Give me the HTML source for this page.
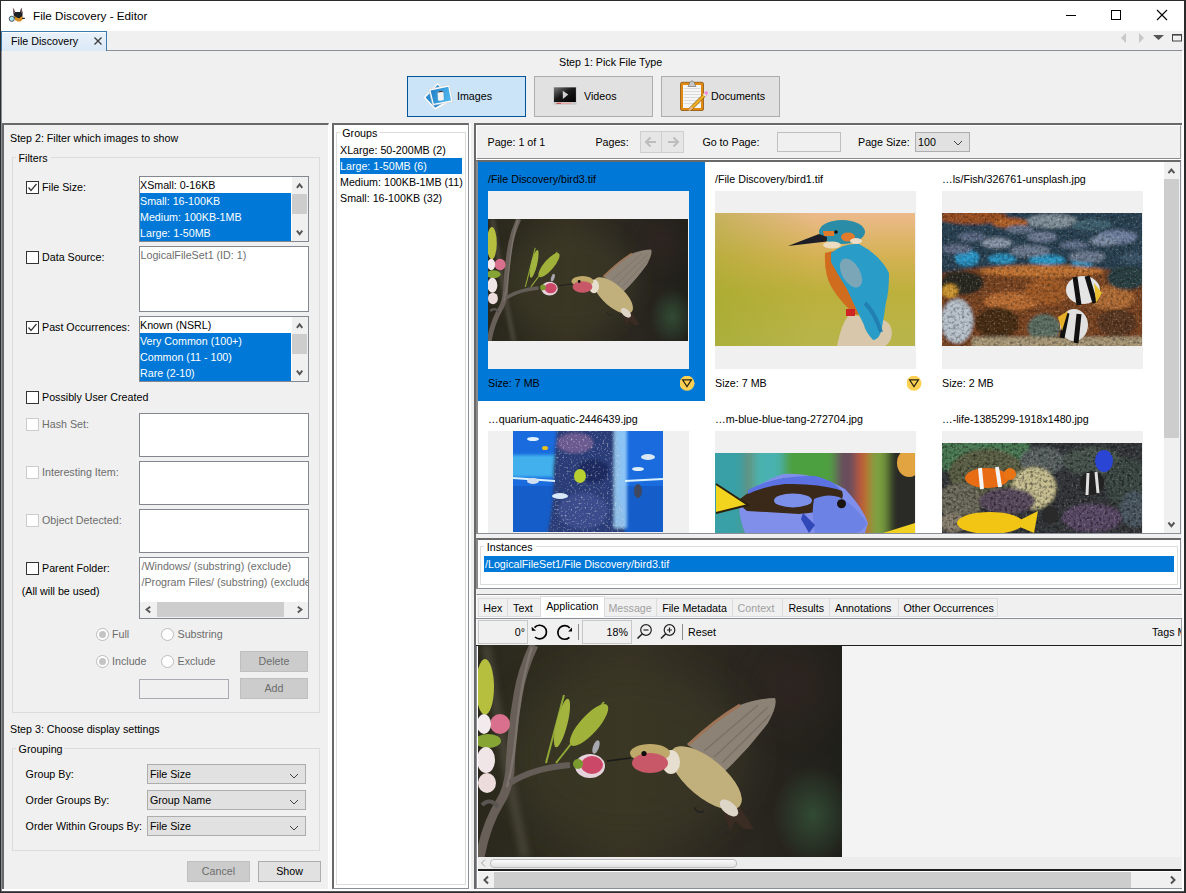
<!DOCTYPE html>
<html><head><meta charset="utf-8">
<style>
html,body{margin:0;padding:0}
body{width:1186px;height:893px;overflow:hidden;position:relative;background:#f0f0f0;font-family:"Liberation Sans",sans-serif;}
.a{position:absolute;box-sizing:border-box}
.t{position:absolute;font-size:10.7px;line-height:13px;white-space:nowrap;color:#000}
.g{color:#6d6d6d}
.w{color:#fff}
.cb{position:absolute;width:13px;height:13px;box-sizing:border-box;border:1px solid #333;background:#fff}
.cbd{border-color:#cccccc}
.lb{position:absolute;box-sizing:border-box;border:1px solid #828790;background:#fff}
.sel{position:absolute;background:#0078d7}
.btn{position:absolute;box-sizing:border-box;border:1px solid #adadad;background:#e1e1e1}
.btnd{background:#cccccc;border-color:#bfbfbf}
.rad{position:absolute;width:13px;height:13px;box-sizing:border-box;border:1px solid #bcbcbc;border-radius:50%;background:#fff}
.tb{position:absolute;box-sizing:border-box;border:1px solid #dcdcdc}
</style></head><body>
<svg width="0" height="0" style="position:absolute">
<defs>
<linearGradient id="hbbg" x1="0" y1="0" x2="1" y2="0"><stop offset="0" stop-color="#2a281d"/><stop offset="0.4" stop-color="#363223"/><stop offset="0.75" stop-color="#2a2620"/><stop offset="1" stop-color="#20201a"/></linearGradient>
<radialGradient id="hbgr" cx="0.5" cy="0.5" r="0.5"><stop offset="0" stop-color="#35553a" stop-opacity="0.8"/><stop offset="1" stop-color="#35553a" stop-opacity="0"/></radialGradient>
<filter id="bl" x="-50%" y="-50%" width="200%" height="200%"><feGaussianBlur stdDeviation="18"/></filter><filter id="bl2" x="-50%" y="-50%" width="200%" height="200%"><feGaussianBlur stdDeviation="3"/></filter>
<symbol id="hb" viewBox="0 0 364 212" preserveAspectRatio="none">
<rect width="364" height="212" fill="url(#hbbg)"/>
<ellipse cx="150" cy="110" rx="120" ry="90" fill="#3e3a26" opacity="0.6" filter="url(#bl)"/>
<ellipse cx="335" cy="170" rx="40" ry="50" fill="url(#hbgr)"/>
<ellipse cx="320" cy="40" rx="40" ry="40" fill="#3a2826" opacity="0.35" filter="url(#bl)"/>
<path d="M8 0 Q25 110 47 212" stroke="#5a564a" stroke-width="9" fill="none" opacity="0.55" filter="url(#bl2)"/>
<path d="M56 0 Q44 25 40 50 Q33 90 32 125 Q30 145 22 157 Q8 180 2 212" stroke="#675f58" stroke-width="9" fill="none"/>
<path d="M54 2 Q43 35 38 90 Q35 120 29 142" stroke="#8a827a" stroke-width="2.5" fill="none" opacity="0.6"/>
<path d="M32 138 Q55 123 92 120" stroke="#645c56" stroke-width="6" fill="none"/>
<path d="M4 160 Q12 152 20 162" stroke="#5a5550" stroke-width="4" fill="none"/>
<path d="M68 118 Q78 80 86 50" stroke="#90a838" stroke-width="2" fill="none"/>
<path d="M78 118 Q100 90 126 57" stroke="#90a838" stroke-width="2" fill="none"/>
<ellipse cx="84" cy="78" rx="5.5" ry="25" transform="rotate(14 84 78)" fill="#a2b43e"/>
<ellipse cx="111" cy="80" rx="9" ry="27" transform="rotate(42 111 80)" fill="#a0b23a"/>
<ellipse cx="118" cy="102" rx="3" ry="7" transform="rotate(20 118 102)" fill="#a8a8b0"/>
<ellipse cx="112" cy="121" rx="15" ry="12" fill="#e6d4dc"/>
<ellipse cx="114" cy="120" rx="11" ry="9" fill="#cc4868"/>
<ellipse cx="100" cy="119" rx="5" ry="5" fill="#7a9a30"/>
<ellipse cx="7" cy="42" rx="9" ry="28" fill="#b6c03e"/>
<ellipse cx="22" cy="79" rx="10" ry="10" fill="#d8708e"/>
<ellipse cx="6" cy="79" rx="7" ry="10" fill="#f2eaec"/>
<ellipse cx="10" cy="96" rx="13" ry="7" fill="#86a434"/>
<ellipse cx="8" cy="115" rx="9" ry="13" fill="#f0e6e8"/>
<ellipse cx="9" cy="138" rx="9" ry="10" fill="#ecdcdc"/>
<path d="M210 100 Q240 70 262 60 Q282 53 297 53 Q300 60 290 78 Q270 105 246 127 Q238 122 233 116 Z" fill="#8c8276"/>
<path d="M236 112 L290 62 M244 118 L292 70 M226 106 L280 60" stroke="#6e6458" stroke-width="1.3" opacity="0.6"/>
<path d="M210 100 Q238 74 262 60" stroke="#9e7456" stroke-width="3" fill="none"/>
<path d="M248 158 L262 162 L276 184 L266 184 L257 176 L252 186 L246 168Z" fill="#3a2c22"/>
<ellipse cx="228" cy="133" rx="44" ry="19" transform="rotate(40 228 133)" fill="#c2b07c"/>
<ellipse cx="251" cy="163" rx="11" ry="6" transform="rotate(40 251 163)" fill="#ddd6c8"/>
<ellipse cx="193" cy="117" rx="9" ry="12" fill="#e6dfd0"/>
<ellipse cx="172" cy="108" rx="20" ry="9" fill="#bfa96a"/>
<ellipse cx="172" cy="118" rx="18" ry="10" fill="#c85868"/>
<path d="M129 116 L153 113" stroke="#1a1a1a" stroke-width="1.5"/>
<circle cx="166" cy="108.5" r="2.6" fill="#0d0d0d"/>
<path d="M216 162 Q220 170 226 166" stroke="#222" stroke-width="1.5" fill="none"/>
</symbol>
<linearGradient id="kfbg" x1="0" y1="0" x2="0" y2="1"><stop offset="0" stop-color="#ecba8c"/><stop offset="0.33" stop-color="#d4b252"/><stop offset="0.6" stop-color="#bcb03c"/><stop offset="1" stop-color="#b8b54c"/></linearGradient>
<linearGradient id="kfbg2" x1="0" y1="0" x2="1" y2="0"><stop offset="0" stop-color="#9aa828" stop-opacity="0.45"/><stop offset="0.5" stop-color="#9aa828" stop-opacity="0"/></linearGradient>
<symbol id="kf" viewBox="0 0 200 133" preserveAspectRatio="none">
<rect width="200" height="133" fill="url(#kfbg)"/>
<rect width="200" height="133" fill="url(#kfbg2)"/>
<path d="M122 133 Q126 112 133 103 Q140 100 150 106 L166 106 Q176 108 177 120 Q176 130 170 133Z" fill="#d8c7aa"/>
<path d="M110 40 Q109 62 117 75 Q127 91 141 102 L152 98 L132 55 L118 38Z" fill="#d06c1e"/>
<path d="M116 40 Q128 30 144 31 Q165 42 174 60 Q174 80 171 89 Q168 110 166 119 Q163 127 158 127 Q150 118 149 112 Q140 94 132 76 Q122 60 116 49Z" fill="#2a9cc8"/>
<ellipse cx="136" cy="60" rx="9" ry="16" transform="rotate(-30 136 60)" fill="#7aa6b8"/>
<path d="M150 90 Q160 100 166 119" stroke="#2280b0" stroke-width="4" fill="none"/>
<ellipse cx="127" cy="19" rx="23" ry="12" fill="#2a8ca6"/>
<path d="M108 18 L119 18 L119 23 L109 23Z" fill="#e07a28"/>
<ellipse cx="133" cy="24" rx="7" ry="4.5" fill="#e27c2c"/>
<ellipse cx="117" cy="32" rx="9" ry="3.5" fill="#ecdcc0"/>
<ellipse cx="141" cy="28" rx="6" ry="3" fill="#ecdcc6"/>
<polygon points="73,33 104,21 112,24 111.7,28.5" fill="#1e1e26"/>
<circle cx="121" cy="19" r="1.8" fill="#111"/>
<rect x="131" y="96" width="9" height="7" fill="#d02424"/>
</symbol>
<filter id="bl4" x="-5%" y="-5%" width="110%" height="110%"><feGaussianBlur stdDeviation="1.6"/></filter>
<symbol id="fc" viewBox="0 0 200 133" preserveAspectRatio="none">
<g filter="url(#bl4)">
<rect x="-5" y="-5" width="210" height="143" fill="#2a3440"/>
<rect x="-5" y="-5" width="210" height="62" fill="#2a4252"/>
<ellipse cx="30" cy="4" rx="35" ry="7" fill="#9a5020"/>
<ellipse cx="68" cy="10" rx="18" ry="5" fill="#b06028"/>
<ellipse cx="110" cy="8" rx="25" ry="7" fill="#80909a"/>
<ellipse cx="150" cy="12" rx="20" ry="6" fill="#406070"/>
<ellipse cx="25" cy="45" rx="12" ry="8" fill="#2a96c8"/>
<ellipse cx="60" cy="46" rx="14" ry="5" fill="#2c92c0"/>
<ellipse cx="105" cy="47" rx="18" ry="5" fill="#2c98c6"/>
<ellipse cx="140" cy="50" rx="10" ry="6" fill="#2a94c4"/>
<ellipse cx="30" cy="24" rx="14" ry="4.5" fill="#5c6a84"/>
<ellipse cx="55" cy="30" rx="15" ry="5" fill="#8a98aa"/>
<ellipse cx="88" cy="38" rx="20" ry="6" fill="#6c7a90"/>
<ellipse cx="78" cy="16" rx="14" ry="4" fill="#66748c"/>
<ellipse cx="100" cy="24" rx="15" ry="5" fill="#6e7c94"/>
<ellipse cx="145" cy="44" rx="18" ry="6" fill="#6c7a90"/>
<ellipse cx="175" cy="24" rx="20" ry="7" fill="#7080a0"/>
<ellipse cx="162" cy="28" rx="14" ry="5" fill="#7a8aa2"/>
<ellipse cx="132" cy="32" rx="14" ry="4" fill="#60708a"/>
<ellipse cx="15" cy="36" rx="15" ry="5" fill="#606c86"/>
<ellipse cx="190" cy="45" rx="12" ry="6" fill="#3a5468"/>
<path d="M-5 62 Q40 50 100 55 Q150 54 205 60 L205 138 L-5 138Z" fill="#7a4420"/>
<ellipse cx="100" cy="58" rx="62" ry="6" fill="#c07232"/>
<ellipse cx="70" cy="88" rx="28" ry="9" fill="#b86c30"/>
<ellipse cx="105" cy="78" rx="22" ry="14" fill="#a05a28"/>
<ellipse cx="170" cy="85" rx="22" ry="12" fill="#b06c34"/>
<ellipse cx="185" cy="65" rx="20" ry="12" fill="#2a4042"/>
<ellipse cx="20" cy="70" rx="22" ry="12" fill="#2a2a22"/>
<ellipse cx="55" cy="110" rx="22" ry="16" fill="#4a2e18"/>
<ellipse cx="175" cy="110" rx="20" ry="14" fill="#5a3820"/>
<ellipse cx="102" cy="115" rx="16" ry="14" fill="#5c6e62"/>
<ellipse cx="15" cy="108" rx="16" ry="22" fill="#b8c2cc"/>
<ellipse cx="8" cy="78" rx="8" ry="7" fill="#d09830"/>
<rect x="30" y="124" width="175" height="14" fill="#a69676"/>
</g>
<rect width="200" height="133" filter="url(#nz)" opacity="0.35"/>
<rect width="200" height="133" filter="url(#nz2)" opacity="0.35"/>
<ellipse cx="141" cy="77" rx="17" ry="14" fill="#e4e4e4"/>
<path d="M133 64 L137 92 M145 63 L153 90" stroke="#111" stroke-width="5"/>
<polygon points="152,70 160,80 154,90" fill="#e8c030"/>
<ellipse cx="132" cy="112" rx="14" ry="16" fill="#e0e0e0"/>
<path d="M125 100 L120 125 M137 101 L134 130" stroke="#111" stroke-width="5"/>
<polygon points="116,104 126,98 120,118" fill="#e8b028"/>
</symbol>
<filter id="nz" x="0" y="0" width="100%" height="100%"><feTurbulence type="fractalNoise" baseFrequency="0.5" numOctaves="1" seed="7"/><feColorMatrix type="matrix" values="0 0 0 0 1  0 0 0 0 0.95  0 0 0 0 0.9  3.2 0 0 0 -1.8"/></filter>
<filter id="nz2" x="0" y="0" width="100%" height="100%"><feTurbulence type="fractalNoise" baseFrequency="0.35" numOctaves="2" seed="11"/><feColorMatrix type="matrix" values="0 0 0 0 0  0 0 0 0 0  0 0 0 0 0  2.5 0 0 0 -1.1"/></filter>
<clipPath id="aqcol"><path d="M44 0 L104 0 Q110 40 104 60 Q112 85 112 101 L34 101 Q42 70 40 40 Z"/></clipPath>
<symbol id="aq" viewBox="0 0 150 101" preserveAspectRatio="none">
<rect width="150" height="101" fill="#1a6cde"/>
<rect x="0" y="55" width="150" height="46" fill="#1458c0" opacity="0.7"/>
<g filter="url(#bl4)">
<rect x="-3" y="24" width="45" height="22" fill="#48bcf0" opacity="0.85"/>
<path d="M44 -3 L104 -3 Q110 40 104 60 Q112 85 112 104 L34 104 Q42 70 40 40 Z" fill="#2c3c78"/>
<ellipse cx="62" cy="12" rx="18" ry="10" fill="#6a5a90"/>
<ellipse cx="80" cy="40" rx="16" ry="12" fill="#1c2c60"/>
<ellipse cx="70" cy="80" rx="25" ry="18" fill="#3a4c8c"/>
<rect x="101" y="-3" width="13" height="100" fill="#a0d4fa" opacity="0.85"/>
</g>
<rect width="150" height="101" filter="url(#nz)" clip-path="url(#aqcol)" opacity="0.55"/>
<path d="M0 47 L42 50 M112 50 L150 48" stroke="#d8f0ff" stroke-width="2"/>
<ellipse cx="20" cy="8" rx="6" ry="2" fill="#e0f0ff"/>
<ellipse cx="32" cy="17" rx="3" ry="2" fill="#e8c020"/>
<ellipse cx="67" cy="45" rx="6" ry="7" fill="#b8d030"/>
<ellipse cx="47" cy="65" rx="8" ry="3" fill="#d8e8f8"/>
<ellipse cx="125" cy="60" rx="4" ry="7" fill="#404860"/>
<ellipse cx="135" cy="26" rx="7" ry="3" fill="#d8e8f8"/>
<ellipse cx="125" cy="38" rx="6" ry="2" fill="#e0eef8"/>
<ellipse cx="20" cy="50" rx="6" ry="3" fill="#d0e0f0"/>
</symbol>
<filter id="bl3" x="-10%" y="-10%" width="120%" height="120%"><feGaussianBlur stdDeviation="5 0"/></filter>
<symbol id="bt" viewBox="0 0 200 80" preserveAspectRatio="none">
<g filter="url(#bl3)">
<rect x="-10" y="-5" width="220" height="90" fill="#3c7c70"/>
<rect x="-10" y="-5" width="45" height="90" fill="#38a0a6"/>
<rect x="30" y="-5" width="8" height="90" fill="#6a8a6a"/>
<rect x="38" y="-5" width="30" height="90" fill="#4ab2b0"/>
<rect x="68" y="-5" width="52" height="90" fill="#4ea040"/>
<rect x="120" y="-5" width="22" height="90" fill="#684e5c"/>
<rect x="142" y="-5" width="12" height="90" fill="#c45c2e"/>
<rect x="154" y="-5" width="18" height="90" fill="#7ca040"/>
<rect x="172" y="-5" width="38" height="90" fill="#2a2c28"/>
</g>
<ellipse cx="194" cy="10" rx="12" ry="14" fill="#e2a440"/>
<polygon points="168,80 200,70 200,80" fill="#f0d020"/>
<path d="M24 50 Q40 30 68 21 Q100 19 130 36 Q148 55 153 70 L150 80 L30 80 Q24 65 24 50Z" fill="#8090ea"/>
<path d="M25 46 Q45 30 70 25 Q100 24 127 38 Q130 46 122 51 Q105 60 84 61 L32 58 Q24 52 25 46Z" fill="#3a2818"/>
<path d="M33 37 Q60 22 100 23 Q118 27 126 37 Q100 30 70 31 Q50 33 33 41Z" fill="#5c72e2"/>
<ellipse cx="78" cy="47.4" rx="19" ry="7" fill="#7c90ea"/>
<path d="M99 46 Q112 40 124 44 Q140 52 152 70 Q148 80 138 80 L100 80 Q96 62 99 46Z" fill="#6c82e4"/>
<path d="M88 60 L100 72 L94 80 L86 66Z" fill="#3048b8"/>
<circle cx="126.5" cy="50.8" r="4.5" fill="#1a1410"/>
<polygon points="1,31 33,52 1,60" fill="#f2d41e"/>
<path d="M1 31 L33 52 L1 60" stroke="#2a2010" stroke-width="2" fill="none"/>
</symbol>
<symbol id="cf" viewBox="0 0 200 90" preserveAspectRatio="none">
<g filter="url(#bl4)">
<rect x="-5" y="-5" width="210" height="100" fill="#34383a"/>
<rect x="-5" y="-5" width="92" height="32" fill="#4c7a54"/>
<ellipse cx="45" cy="30" rx="38" ry="24" fill="#5c6044"/>
<ellipse cx="18" cy="58" rx="22" ry="18" fill="#6e6c5c"/>
<ellipse cx="100" cy="18" rx="22" ry="14" fill="#5c6464"/>
<ellipse cx="150" cy="18" rx="30" ry="14" fill="#485450"/>
<ellipse cx="185" cy="40" rx="22" ry="25" fill="#3e4a44"/>
<ellipse cx="92" cy="45" rx="22" ry="21" fill="#c6be90"/>
<ellipse cx="65" cy="58" rx="28" ry="13" fill="#5a4c5e"/>
<ellipse cx="150" cy="75" rx="30" ry="14" fill="#5c4c68"/>
<ellipse cx="192" cy="66" rx="14" ry="18" fill="#4c5862"/>
<ellipse cx="10" cy="80" rx="12" ry="10" fill="#8a8070"/>
</g>
<rect width="200" height="90" filter="url(#nz)" opacity="0.3"/>
<rect width="200" height="90" filter="url(#nz2)" opacity="0.5"/>
<ellipse cx="45" cy="35" rx="22" ry="10" fill="#e86c14"/>
<path d="M38 25 L40 46 M55 24 L58 44" stroke="#f4f4f4" stroke-width="4"/>
<ellipse cx="68" cy="31" rx="6" ry="6" fill="#e87414"/>
<ellipse cx="162" cy="18" rx="9" ry="11" fill="#2a44d4"/>
<ellipse cx="150" cy="40" rx="12" ry="12" fill="#222"/>
<path d="M146 30 L145 52 M154 29 L156 50" stroke="#e0e0e0" stroke-width="3"/>
<ellipse cx="48" cy="80" rx="33" ry="11" fill="#f2c414"/>
<polygon points="78,77 96,68 92,90 78,84" fill="#f0c818"/>
<ellipse cx="108" cy="72" rx="8" ry="9" fill="#2a2a2a"/>
</symbol>
</defs></svg>
<!-- window frame -->
<div class="a" style="left:0;top:0;width:1186px;height:893px;border:1px solid #2b2b2b;border-right-width:2px;border-bottom-width:2px"></div>
<!-- title bar -->
<div class="a" style="left:1px;top:1px;width:1183px;height:30px;background:#fff"></div>
<div class="t" style="left:33px;top:9px;font-size:11.7px;line-height:14px">File Discovery - Editor</div>
<!-- window controls -->
<div class="a" style="left:1066px;top:15px;width:10px;height:1px;background:#000"></div>
<div class="a" style="left:1111px;top:10px;width:10px;height:10px;border:1px solid #000"></div>
<svg class="a" style="left:1156px;top:9px" width="12" height="12"><path d="M1 1L11 11M11 1L1 11" stroke="#000" stroke-width="1.1"/></svg>


<!-- app icon -->
<svg class="a" style="left:6px;top:4px" width="24" height="22" viewBox="0 0 24 22">
<path d="M6.8 3.5 L9.3 8 L14 8 L15.3 3.5 L16.6 8.5 L16.4 12.5 L13.8 14.5 L10 14 L7.8 12 L7.4 8.5Z" fill="#1b2129"/>
<path d="M7.6 5 L8.6 9" stroke="#b87070" stroke-width="0.9"/>
<path d="M15.4 5.5 L15.6 9" stroke="#9a5a50" stroke-width="0.9"/>
<path d="M8 11.8 L10.5 13.2 L12.5 14.5 L14 13.5 L16.6 12 L16.5 15.5 L14.5 17.6 L11.5 17.6 L9 16 Z" fill="#d98c1c"/>
<path d="M12.2 13 L14.2 13 L13.2 14.6Z" fill="#111"/>
<path d="M16 14.2 L18.8 14.4" stroke="#111" stroke-width="1.1"/>
<circle cx="5.8" cy="14.8" r="2.6" fill="#a8e2f2" stroke="#3a4a50" stroke-width="0.9"/>
<path d="M8.2 13.8 L9.5 13.2" stroke="#3a4a50" stroke-width="1"/>
</svg>
<!-- tab bar -->
<div class="a" style="left:1px;top:31px;width:106px;height:20px;border:1px solid #3d7ab0;border-bottom:none;background:linear-gradient(#e9f2fb,#dbe8f7)"></div>
<div class="a" style="left:2px;top:32px;width:103px;height:1px;background:#fff"></div>
<div class="t" style="left:11px;top:35px">File Discovery</div>
<svg class="a" style="left:93px;top:36px" width="10" height="10"><path d="M1.5 1.5L8.5 8.5M8.5 1.5L1.5 8.5" stroke="#404040" stroke-width="1.4"/></svg>
<div class="a" style="left:107px;top:50px;width:1075px;height:1px;background:#8a8f9a"></div>
<svg class="a" style="left:1118px;top:32px" width="66" height="13">
<path d="M8 1 L3 6 L8 11Z" fill="#c8c8c8"/>
<path d="M21 1 L26 6 L21 11Z" fill="#c8c8c8"/>
<path d="M35 3 L46 3 L40.5 8Z" fill="#555"/>
<rect x="54.5" y="2.5" width="9" height="6.5" fill="none" stroke="#444" stroke-width="1"/>
<rect x="54" y="2" width="10" height="1.6" fill="#444"/>
</svg>
<!-- content borders -->
<div class="a" style="left:1px;top:51px;width:1px;height:840px;background:#8a8f9a"></div>
<div class="a" style="left:1182px;top:51px;width:2px;height:840px;background:#fff"></div>
<div class="a" style="left:2px;top:889px;width:1182px;height:2px;background:#fff"></div>
<div class="a" style="left:1px;top:891px;width:1183px;height:1px;background:#55585e"></div>
<!-- step 1 -->
<div class="t" style="left:559px;top:56px">Step 1: Pick File Type</div>
<div class="btn" style="left:407px;top:76px;width:119px;height:41px;background:#cce4f7;border-color:#005499"></div>
<div class="btn" style="left:534px;top:76px;width:119px;height:41px"></div>
<div class="btn" style="left:661px;top:76px;width:119px;height:41px"></div>
<div class="t" style="left:457px;top:90px">Images</div>
<div class="t" style="left:584px;top:90px">Videos</div>
<div class="t" style="left:711px;top:90px">Documents</div>
<svg class="a" style="left:415px;top:76px" width="50" height="40">
<defs><linearGradient id="ph" x1="0" y1="0" x2="1" y2="0.3"><stop offset="0" stop-color="#1f7cc4"/><stop offset="1" stop-color="#4cb4ec"/></linearGradient></defs>
<polygon points="8.3,21.5 22.8,6.6 38,24 20.2,34" fill="#fff" stroke="#d8d8d8" stroke-width="0.6"/>
<polygon points="10.5,21.5 22.8,8.8 35,23 20.2,31.8" fill="#2a8cd0"/>
<polygon points="13.8,13.2 34.5,8.8 37.8,25.8 17.8,29.3" fill="#fff" stroke="#cfcfcf" stroke-width="0.6"/>
<polygon points="15.6,14.6 33.3,10.8 36,24.4 18.8,27.8" fill="url(#ph)"/>
<path d="M22.5 16.5 Q25.5 13.5 28.5 16 L28.8 24 Q25.5 25.5 23 24.2Z" fill="#f2f2f2"/>
<path d="M22.3 16.8 Q25.5 13 28.7 16.2 Q25.5 15.5 22.3 16.8Z" fill="#333"/>
</svg>
<svg class="a" style="left:545px;top:76px" width="50" height="40">
<defs><linearGradient id="vs" x1="0" y1="0" x2="1" y2="1"><stop offset="0" stop-color="#7a7a7a"/><stop offset="0.45" stop-color="#1a1a1a"/><stop offset="1" stop-color="#000"/></linearGradient></defs>
<rect x="8.3" y="11" width="23.3" height="17.7" fill="#c8c8c8"/>
<rect x="9" y="11.4" width="21.9" height="14.6" fill="url(#vs)"/>
<polygon points="17.7,14.8 23.3,18.4 17.9,22.9" fill="#d0d0d0"/>
<rect x="11.5" y="26.8" width="15" height="1.2" fill="#e8a8a8"/>
<rect x="11.5" y="26.8" width="4.5" height="1.2" fill="#c85858"/>
</svg>
<svg class="a" style="left:670px;top:76px" width="50" height="40">
<rect x="10.5" y="6.3" width="23" height="28.2" rx="1.5" fill="#e08a12" stroke="#8a5512" stroke-width="0.8"/>
<rect x="13" y="9" width="18" height="23" fill="#f6f6f6"/>
<path d="M13.5 12.5H30.5M13.5 15.5H30.5M13.5 18.5H30.5M13.5 21.5H30.5M13.5 24.5H30.5M13.5 27.5H30.5" stroke="#d4d4d4" stroke-width="0.8"/>
<path d="M18 10.5 L20 6.5 Q22 3.2 24 6.5 L26 10.5Z" fill="#c8c8c8" stroke="#777" stroke-width="0.7"/>
<path d="M20 33.5 L35.5 18" stroke="#8a5a10" stroke-width="3.6"/>
<path d="M20 33.5 L35.5 18" stroke="#f2b424" stroke-width="2.4"/>
<path d="M34 19.5 L36.5 17" stroke="#e8e8e8" stroke-width="3.4"/>
<circle cx="36.2" cy="17" r="1.8" fill="#ee88dd"/>
<path d="M19 34.5 L21.5 31.5 L22 32.2Z" fill="#f0c898" stroke="#e8b888" stroke-width="1.5"/>
</svg>


<!-- LEFT PANEL -->
<div class="a" style="left:2px;top:123px;width:327px;height:766px;border-top:2px solid #696969;border-left:2px solid #696969;border-right:1px solid #fff"></div>
<div class="a" style="left:329px;top:123px;width:3px;height:766px;background:#fbfbfb"></div>
<div class="t" style="left:10px;top:132px">Step 2: Filter which images to show</div>
<div class="a" style="left:12px;top:157px;width:308px;height:556px;border:1px solid #dcdcdc"></div>
<div class="a" style="left:16px;top:152px;width:35px;height:12px;background:#f0f0f0"></div>
<div class="t" style="left:18.6px;top:152px">Filters</div>

<!-- File Size -->
<div class="cb" style="left:26px;top:181px"></div>
<svg class="a" style="left:26px;top:181px" width="13" height="13"><path d="M2.5 6.5 L5 9.5 L10.5 3" stroke="#333" stroke-width="1.2" fill="none"/></svg>
<div class="t" style="left:42px;top:181px">File Size:</div>
<div class="lb" style="left:139px;top:176px;width:170px;height:66px"></div>
<div class="sel" style="left:140px;top:193px;width:151px;height:48px"></div>
<div class="t" style="left:140px;top:179px">XSmall: 0-16KB</div>
<div class="t w" style="left:140px;top:195px">Small: 16-100KB</div>
<div class="t w" style="left:140px;top:211px">Medium: 100KB-1MB</div>
<div class="t w" style="left:140px;top:227px">Large: 1-50MB</div>
<div class="a" style="left:292px;top:177px;width:16px;height:64px;background:#f0f0f0"></div>
<div class="a" style="left:292px;top:194px;width:15px;height:20px;background:#cdcdcd"></div>
<svg class="a" style="left:291px;top:177px" width="17" height="64"><path d="M5.9 10.8 L8.6 7.3 L11.3 10.8 M5.9 53.7 L8.6 57.2 L11.3 53.7" stroke="#555" stroke-width="1.9" fill="none"/></svg>

<!-- Data Source -->
<div class="cb" style="left:26px;top:251px"></div>
<div class="t" style="left:42px;top:251px">Data Source:</div>
<div class="lb" style="left:139px;top:246px;width:170px;height:66px"></div>
<div class="t g" style="left:140.5px;top:249px">LogicalFileSet1 (ID: 1)</div>

<!-- Past Occurrences -->
<div class="cb" style="left:26px;top:321px"></div>
<svg class="a" style="left:26px;top:321px" width="13" height="13"><path d="M2.5 6.5 L5 9.5 L10.5 3" stroke="#333" stroke-width="1.2" fill="none"/></svg>
<div class="t" style="left:42px;top:321px">Past Occurrences:</div>
<div class="lb" style="left:139px;top:316px;width:170px;height:66px"></div>
<div class="sel" style="left:140px;top:333px;width:151px;height:48px"></div>
<div class="t" style="left:140px;top:319px">Known (NSRL)</div>
<div class="t w" style="left:140px;top:335px">Very Common (100+)</div>
<div class="t w" style="left:140px;top:351px">Common (11 - 100)</div>
<div class="t w" style="left:140px;top:367px">Rare (2-10)</div>
<div class="a" style="left:292px;top:317px;width:16px;height:64px;background:#f0f0f0"></div>
<div class="a" style="left:292px;top:334px;width:15px;height:20px;background:#cdcdcd"></div>
<svg class="a" style="left:291px;top:317px" width="17" height="64"><path d="M5.9 10.8 L8.6 7.3 L11.3 10.8 M5.9 53.7 L8.6 57.2 L11.3 53.7" stroke="#555" stroke-width="1.9" fill="none"/></svg>

<!-- Possibly user created -->
<div class="cb" style="left:26px;top:391px"></div>
<div class="t" style="left:42px;top:391px">Possibly User Created</div>

<!-- Hash set etc -->
<div class="cb cbd" style="left:26px;top:418px"></div>
<div class="t g" style="left:42px;top:418px">Hash Set:</div>
<div class="lb" style="left:139px;top:413px;width:170px;height:44px"></div>
<div class="cb cbd" style="left:26px;top:466px"></div>
<div class="t g" style="left:42px;top:466px">Interesting Item:</div>
<div class="lb" style="left:139px;top:461px;width:170px;height:44px"></div>
<div class="cb cbd" style="left:26px;top:514px"></div>
<div class="t g" style="left:42px;top:514px">Object Detected:</div>
<div class="lb" style="left:139px;top:509px;width:170px;height:44px"></div>

<!-- Parent folder -->
<div class="cb" style="left:26px;top:562px"></div>
<div class="t" style="left:42px;top:562px">Parent Folder:</div>
<div class="t" style="left:21.7px;top:585px">(All will be used)</div>
<div class="lb" style="left:139px;top:557px;width:170px;height:62px;overflow:hidden">
<div class="t g" style="left:1.5px;top:2px">/Windows/ (substring) (exclude)</div>
<div class="t g" style="left:1.5px;top:18px">/Program Files/ (substring) (exclude)</div>
<div class="a" style="left:0;top:44px;width:168px;height:16px;background:#f0f0f0"></div>
<div class="a" style="left:17px;top:44px;width:127px;height:15px;background:#cdcdcd"></div>
<svg class="a" style="left:0;top:44px" width="168" height="16"><path d="M10.2 4.8 L6.6 7.6 L10.2 10.4 M157.8 4.8 L161.4 7.6 L157.8 10.4" stroke="#555" stroke-width="1.9" fill="none"/></svg>
</div>

<!-- radios -->
<div class="rad" style="left:96px;top:628px"></div><div class="a" style="left:99px;top:631px;width:7px;height:7px;border-radius:50%;background:#c4c4c4"></div>
<div class="t g" style="left:112px;top:628px">Full</div>
<div class="rad" style="left:161px;top:628px"></div>
<div class="t g" style="left:177.5px;top:628px">Substring</div>
<div class="rad" style="left:96px;top:655px"></div><div class="a" style="left:99px;top:658px;width:7px;height:7px;border-radius:50%;background:#c4c4c4"></div>
<div class="t g" style="left:112px;top:655px">Include</div>
<div class="rad" style="left:161px;top:655px"></div>
<div class="t g" style="left:177.5px;top:655px">Exclude</div>
<div class="btn btnd" style="left:240px;top:651px;width:68px;height:21px"></div>
<div class="t g" style="left:240px;top:655px;width:68px;text-align:center">Delete</div>
<div class="a" style="left:139px;top:679px;width:90px;height:20px;border:1px solid #a8abb2;background:#f0f0f0"></div>
<div class="btn btnd" style="left:240px;top:678px;width:68px;height:21px"></div>
<div class="t g" style="left:240px;top:682px;width:68px;text-align:center">Add</div>

<!-- step 3 -->
<div class="t" style="left:10px;top:723px">Step 3: Choose display settings</div>
<div class="a" style="left:12px;top:748px;width:308px;height:103px;border:1px solid #dcdcdc"></div>
<div class="a" style="left:16px;top:743px;width:48px;height:12px;background:#f0f0f0"></div>
<div class="t" style="left:18.6px;top:743px">Grouping</div>
<div class="t" style="left:25.6px;top:768px">Group By:</div>
<div class="t" style="left:25.6px;top:794px">Order Groups By:</div>
<div class="t" style="left:25.6px;top:820px">Order Within Groups By:</div>
<div class="btn" style="left:147px;top:764px;width:159px;height:20px"></div>
<div class="btn" style="left:147px;top:790px;width:159px;height:20px"></div>
<div class="btn" style="left:147px;top:816px;width:159px;height:20px"></div>
<div class="t" style="left:150px;top:768px">File Size</div>
<div class="t" style="left:150px;top:794px">Group Name</div>
<div class="t" style="left:150px;top:820px">File Size</div>
<svg class="a" style="left:288px;top:770px" width="12" height="66"><path d="M2 4 L6 8 L10 4M2 30 L6 34 L10 30M2 56 L6 60 L10 56" stroke="#444" stroke-width="1" fill="none"/></svg>
<div class="btn btnd" style="left:187px;top:861px;width:63px;height:21px"></div>
<div class="t g" style="left:187px;top:865px;width:63px;text-align:center">Cancel</div>
<div class="btn" style="left:258px;top:861px;width:63px;height:21px"></div>
<div class="t" style="left:258px;top:865px;width:63px;text-align:center">Show</div>


<!-- GROUPS PANEL -->
<div class="a" style="left:332px;top:123px;width:137px;height:766px;background:#fff;border-top:2px solid #696969;border-left:2px solid #696969;border-right:1px solid #8a8f9a;border-bottom:1px solid #8a8f9a"></div>
<div class="a" style="left:469px;top:123px;width:2px;height:766px;background:#fff"></div>
<div class="a" style="left:336px;top:132px;width:130px;height:753px;border:1px solid #dcdcdc"></div>
<div class="a" style="left:340px;top:127px;width:40px;height:12px;background:#fff"></div>
<div class="t" style="left:342.3px;top:127px">Groups</div>
<div class="sel" style="left:340px;top:158px;width:122px;height:16px"></div>
<div class="t" style="left:340px;top:143.5px">XLarge: 50-200MB (2)</div>
<div class="t w" style="left:340px;top:159.5px">Large: 1-50MB (6)</div>
<div class="t" style="left:340px;top:175.5px">Medium: 100KB-1MB (11)</div>
<div class="t" style="left:340px;top:191.5px">Small: 16-100KB (32)</div>

<!-- RIGHT PANEL -->
<div class="a" style="left:474px;top:123px;width:708px;height:766px;border-top:2px solid #696969;border-left:2px solid #696969"></div>
<!-- pager -->
<div class="a" style="left:476px;top:125px;width:705px;height:34px;border-top:1px solid #fff;border-left:1px solid #fff;border-right:1px solid #a0a0a0;border-bottom:1px solid #8c8c8c"></div>
<div class="a" style="left:476px;top:159px;width:705px;height:1px;background:#fff"></div>
<div class="t" style="left:487.5px;top:136px">Page: 1 of 1</div>
<div class="t" style="left:595.4px;top:136px">Pages:</div>
<div class="btn" style="left:640px;top:131px;width:22px;height:22px;background:#e6e6e6;border-color:#cfcfcf"></div>
<div class="btn" style="left:661px;top:131px;width:23px;height:22px;background:#e6e6e6;border-color:#cfcfcf"></div>
<svg class="a" style="left:640px;top:131px" width="44" height="22"><path d="M16 11 H6 M10.5 6.5 L6 11 L10.5 15.5 M28 11 H38 M33.5 6.5 L38 11 L33.5 15.5" stroke="#bdbdbd" stroke-width="2" fill="none"/></svg>
<div class="t" style="left:702.4px;top:136px">Go to Page:</div>
<div class="a" style="left:777px;top:132px;width:64px;height:20px;border:1px solid #bfbfbf;background:#f0f0f0"></div>
<div class="t" style="left:858px;top:136px">Page Size:</div>
<div class="btn" style="left:915px;top:132px;width:55px;height:20px"></div>
<div class="t" style="left:918px;top:136px">100</div>
<svg class="a" style="left:952px;top:138px" width="12" height="10"><path d="M2 3 L6 7 L10 3" stroke="#444" stroke-width="1" fill="none"/></svg>

<!-- grid -->
<div class="a" style="left:476px;top:160px;width:705px;height:374px;background:#fff;border-top:2px solid #696969;border-left:2px solid #8a8a8a;border-right:1px solid #8a8f9a;border-bottom:1px solid #8a8f9a;overflow:hidden">
<div class="sel" style="left:0;top:0;width:227px;height:239px"></div>
<div class="t" style="left:10px;top:11px">/File Discovery/bird3.tif</div>
<div class="t" style="left:237px;top:11px">/File Discovery/bird1.tif</div>
<div class="t" style="left:464px;top:11px">&hellip;ls/Fish/326761-unsplash.jpg</div>
<div class="a" style="left:10px;top:29px;width:201px;height:178px;background:#f0f0f0"></div>
<div class="a" style="left:237px;top:29px;width:201px;height:178px;background:#f0f0f0"></div>
<div class="a" style="left:464px;top:29px;width:201px;height:178px;background:#f0f0f0"></div>
<svg class="a" style="left:10px;top:57px" width="200" height="122"><use href="#hb"/></svg>
<svg class="a" style="left:237px;top:51px" width="200" height="133"><use href="#kf"/></svg>
<svg class="a" style="left:464px;top:51px" width="200" height="133"><use href="#fc"/></svg>
<div class="t" style="left:10px;top:215px">Size: 7 MB</div>
<div class="t" style="left:237px;top:215px">Size: 7 MB</div>
<div class="t" style="left:464px;top:215px">Size: 2 MB</div>
<svg class="a" style="left:202px;top:214px" width="15" height="15"><circle cx="7" cy="7.2" r="7.5" fill="#fcd052"/><path d="M2.6 3.9 L11.4 3.9 L7 10.6Z" fill="none" stroke="#2a2410" stroke-width="1.2"/></svg><svg class="a" style="left:429px;top:214px" width="15" height="15"><circle cx="7" cy="7.2" r="7.5" fill="#fcd052"/><path d="M2.6 3.9 L11.4 3.9 L7 10.6Z" fill="none" stroke="#2a2410" stroke-width="1.2"/></svg>
<div class="t" style="left:10px;top:251px">&hellip;quarium-aquatic-2446439.jpg</div>
<div class="t" style="left:237px;top:251px">&hellip;m-blue-blue-tang-272704.jpg</div>
<div class="t" style="left:464px;top:251px">&hellip;-life-1385299-1918x1480.jpg</div>
<div class="a" style="left:10px;top:269px;width:201px;height:178px;background:#f0f0f0"></div>
<div class="a" style="left:237px;top:269px;width:201px;height:178px;background:#f0f0f0"></div>
<div class="a" style="left:464px;top:269px;width:201px;height:178px;background:#f0f0f0"></div>
<svg class="a" style="left:35px;top:269px" width="150" height="101"><use href="#aq"/></svg>
<svg class="a" style="left:237px;top:291px" width="200" height="80"><use href="#bt"/></svg>
<svg class="a" style="left:464px;top:281px" width="200" height="90"><use href="#cf"/></svg>
<div class="a" style="left:686px;top:0;width:16px;height:371px;background:#f0f0f0"></div>
<div class="a" style="left:686px;top:17px;width:15px;height:259px;background:#cdcdcd"></div>
<svg class="a" style="left:686px;top:0" width="16" height="371"><path d="M4.4 11.2 L7.4 7.6 L10.4 11.2 M4.4 360.5 L7.4 364.1 L10.4 360.5" stroke="#555" stroke-width="2" fill="none"/></svg>

</div>


<!-- INSTANCES -->
<div class="a" style="left:476px;top:538px;width:705px;height:51px;background:#fff;border-top:2px solid #696969;border-left:2px solid #8a8a8a;border-right:1px solid #8a8f9a;border-bottom:1px solid #8a8f9a"></div>
<div class="a" style="left:480px;top:546px;width:698px;height:39px;border:1px solid #dcdcdc"></div>
<div class="a" style="left:484px;top:541px;width:52px;height:10px;background:#fff"></div>
<div class="t" style="left:486.8px;top:541px">Instances</div>
<div class="sel" style="left:484px;top:556px;width:690px;height:16px"></div>
<div class="t w" style="left:485px;top:557.5px">/LogicalFileSet1/File Discovery/bird3.tif</div>

<!-- CONTENT VIEWER -->
<div class="a" style="left:476px;top:594px;width:706px;height:295px;border-top:1px solid #8c8c8c;border-left:1px solid #fafafa"></div>
<div class="a" style="left:478px;top:595px;width:703px;height:1px;background:#fff"></div>
<!-- tabs -->
<div class="tb" style="left:478px;top:598px;width:30px;height:19px"></div>
<div class="tb" style="left:507px;top:598px;width:34px;height:19px"></div>
<div class="tb" style="left:604px;top:598px;width:53px;height:19px"></div>
<div class="tb" style="left:656px;top:598px;width:77px;height:19px"></div>
<div class="tb" style="left:732px;top:598px;width:51px;height:19px"></div>
<div class="tb" style="left:782px;top:598px;width:48px;height:19px"></div>
<div class="tb" style="left:829px;top:598px;width:70px;height:19px"></div>
<div class="tb" style="left:898px;top:598px;width:100px;height:19px"></div>
<div class="a" style="left:540px;top:596px;width:65px;height:21px;background:#fff;border:1px solid #dcdcdc;border-bottom:none"></div>
<div class="t" style="left:483.3px;top:602px">Hex</div>
<div class="t" style="left:513.1px;top:602px">Text</div>
<div class="t" style="left:546.2px;top:600px">Application</div>
<div class="t" style="left:608.4px;top:602px;color:#a0a0a0">Message</div>
<div class="t" style="left:662.2px;top:602px">File Metadata</div>
<div class="t" style="left:737.6px;top:602px;color:#a0a0a0">Context</div>
<div class="t" style="left:788.4px;top:602px">Results</div>
<div class="t" style="left:835px;top:602px">Annotations</div>
<div class="t" style="left:903.5px;top:602px">Other Occurrences</div>
<!-- toolbar -->
<div class="a" style="left:478px;top:617px;width:703px;height:1px;background:#fafafa"></div>
<div class="a" style="left:476px;top:618px;width:706px;height:28px;border-top:1px solid #8a909a;border-bottom:1px solid #1e1e1e;border-right:1px solid #a0a0a0"></div>
<div class="a" style="left:478px;top:620px;width:50px;height:24px;border:1px solid #c8c8c8"></div>
<div class="t" style="left:478px;top:626px;width:47px;text-align:right">0°</div>
<svg class="a" style="left:528px;top:618px" width="50" height="28">
<path d="M7 19 A6.8 6.8 0 1 0 6.5 9.6" stroke="#000" stroke-width="1.7" fill="none"/>
<path d="M3.6 8.8 L3.9 12.8 L8 12.8Z" fill="#000"/>
<path d="M41.4 19.3 A6.8 6.8 0 1 1 41.8 10" stroke="#000" stroke-width="1.7" fill="none"/>
<path d="M44 9.6 L44 13.6 L40.2 13.6Z" fill="#000"/>
</svg>
<div class="a" style="left:578px;top:624px;width:1px;height:16px;background:#8c8c8c"></div>
<div class="a" style="left:582px;top:620px;width:50px;height:24px;border:1px solid #c8c8c8"></div>
<div class="t" style="left:582px;top:626px;width:46px;text-align:right">18%</div>
<svg class="a" style="left:635px;top:622px" width="42" height="20">
<circle cx="11" cy="8" r="5.3" stroke="#222" stroke-width="1.2" fill="none"/><path d="M7.3 11.8 L2.5 16.5" stroke="#222" stroke-width="1.6"/><path d="M8.5 8 H13.5" stroke="#222" stroke-width="1.2"/>
<circle cx="34.5" cy="8" r="5.3" stroke="#222" stroke-width="1.2" fill="none"/><path d="M30.8 11.8 L26 16.5" stroke="#222" stroke-width="1.6"/><path d="M32 8 H37 M34.5 5.5 V10.5" stroke="#222" stroke-width="1.2"/>
</svg>
<div class="a" style="left:682px;top:624px;width:1px;height:16px;background:#8c8c8c"></div>
<div class="t" style="left:688.1px;top:626px">Reset</div>
<div class="a" style="left:1140px;top:620px;width:41px;height:24px;overflow:hidden"><div class="t" style="left:12px;top:5.5px">Tags Menu</div></div>
<!-- viewer image -->
<div class="a" style="left:476px;top:646px;width:1px;height:242px;background:#8a8f9a"></div>
<div class="a" style="left:477px;top:646px;width:1px;height:242px;background:#fff"></div>
<div class="a" style="left:478px;top:646px;width:703px;height:211px;background:#f3f3f3"></div>
<svg class="a" style="left:478px;top:645px" width="364" height="212"><use href="#hb"/></svg>
<div class="a" style="left:478px;top:857px;width:703px;height:12px;background:#ececec"></div>
<svg class="a" style="left:478px;top:857px" width="12" height="12"><path d="M7 2.5 L3.5 6 L7 9.5" stroke="#a0a0a0" stroke-width="1" fill="none"/></svg>
<div class="a" style="left:490px;top:859px;width:247px;height:9px;border:1px solid #bdbdbd;border-radius:4px;background:linear-gradient(#fafafa,#e2e2e2)"></div>
<div class="a" style="left:478px;top:869px;width:703px;height:2px;background:#1e1e1e"></div>
<div class="a" style="left:478px;top:871px;width:703px;height:1px;background:#fff"></div>
<div class="a" style="left:478px;top:872px;width:703px;height:16px;background:#f0f0f0"></div>
<div class="a" style="left:494px;top:872px;width:637px;height:16px;background:#cdcdcd"></div>
<svg class="a" style="left:478px;top:872px" width="703" height="16"><path d="M10 4.5 L6.5 8 L10 11.5 M693 4.5 L696.5 8 L693 11.5" stroke="#505050" stroke-width="2" fill="none"/></svg>
<div class="a" style="left:476px;top:888px;width:706px;height:1px;background:#8a8f9a"></div>

</body></html>
